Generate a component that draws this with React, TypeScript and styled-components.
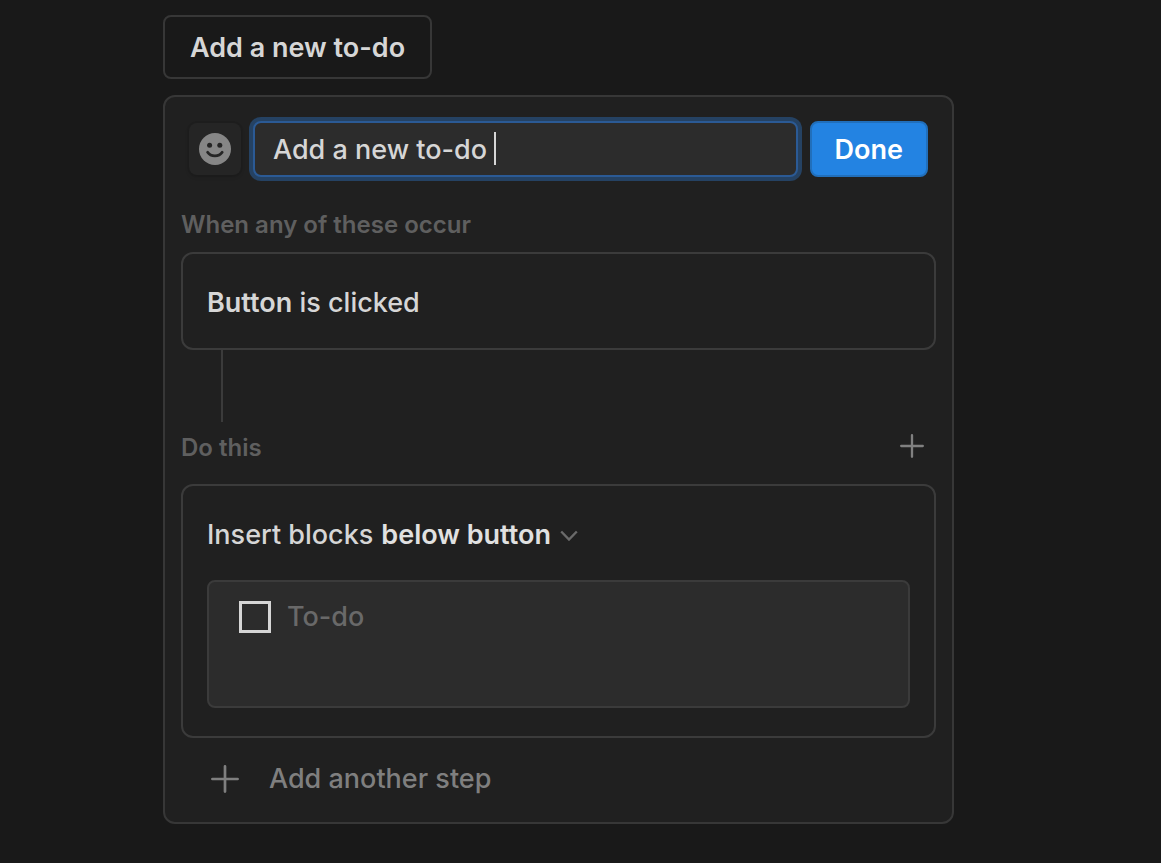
import React, { useState } from "react";
import styled, { createGlobalStyle } from "styled-components";

const GlobalStyle = createGlobalStyle`
  *, *::before, *::after { box-sizing: border-box; }
  body {
    margin: 0;
    background: #191919;
    color: #d6d6d6;
    font-family: Inter, "Liberation Sans", sans-serif;
    font-size: 27px;
    font-weight: 450;
    line-height: 36px;
  }
  button, input, select { font: inherit; color: inherit; margin: 0; }
  button { cursor: pointer; }
`;

const Page = styled.main`
  display: flex;
  flex-direction: column;
  align-items: flex-start;
  gap: 16px;
  padding: 15px 207px 39px 163px;
`;

const PreviewButton = styled.button`
  height: 64px;
  padding: 2px 25px 0;
  border: 2px solid #373737;
  border-radius: 8px;
  background: transparent;
  font-weight: 640;
`;

const Panel = styled.section`
  display: flex;
  flex-direction: column;
  align-self: stretch;
  padding: 24px 16px 17px;
  border: 2px solid #373737;
  border-radius: 12px;
  background: #202020;
`;

const TitleRow = styled.form`
  display: flex;
  align-items: center;
  gap: 12px;
  padding: 0 8px;
`;

const EmojiButton = styled.button`
  display: grid;
  place-items: center;
  width: 52px;
  height: 52px;
  padding: 0;
  border: 0;
  border-radius: 8px;
  background: #252525;
  box-shadow: 0 2px 4px rgba(0, 0, 0, 0.12), 0 0 0 2px rgba(0, 0, 0, 0.06);
`;

const Field = styled.div`
  position: relative;
  flex: 1;
  min-width: 0;
`;

const NameInput = styled.input`
  display: block;
  width: 100%;
  height: 56px;
  padding: 0 18px;
  border: 2px solid #2b5a95;
  border-radius: 8px;
  outline: none;
  background: #2c2c2c;
  box-shadow: 0 0 0 4px #254263;
  caret-color: transparent;
`;

const Caret = styled.span`
  position: absolute;
  top: 11px;
  left: 241px;
  width: 2px;
  height: 33px;
  background: #d6d6d6;
`;

const DoneButton = styled.button`
  height: 56px;
  padding: 2px 23px 0;
  border: 2px solid #216fbb;
  border-radius: 8px;
  background: #2383e2;
  color: #ffffff;
  font-weight: 600;
`;

const SectionHead = styled.div<{ $top: number; $bottom: number }>`
  display: flex;
  align-items: flex-start;
  justify-content: space-between;
  padding: ${(p) => p.$top}px 8px ${(p) => p.$bottom}px 0;
`;

const SectionTitle = styled.h2`
  margin: 0;
  color: #5f5f5f;
  font-size: 24px;
  font-weight: 600;
  line-height: 32px;
`;

const IconButton = styled.button`
  display: grid;
  place-items: center;
  width: 32px;
  height: 28px;
  padding: 0;
  border: 0;
  background: transparent;
  color: #808080;
`;

const Card = styled.div<{ $bottom: number }>`
  padding: 29px 24px ${(p) => p.$bottom}px;
  border: 2px solid #3b3b3b;
  border-radius: 12px;
`;

const CardText = styled.p`
  margin: 0;
  line-height: 40px;
`;

const Strong = styled.b`
  font-weight: 640;
`;

const Connector = styled.div`
  width: 2px;
  height: 72px;
  margin-left: 40px;
  background: #3b3b3b;
`;

const ActionRow = styled.label`
  display: flex;
  align-items: center;
  gap: 8px;
  height: 40px;
`;

const PlaceSelect = styled.span`
  display: flex;
  align-items: center;
  gap: 9px;
  color: #6a6a6a;

  select {
    appearance: none;
    padding: 0;
    border: 0;
    background: transparent;
    color: #e1e1e1;
    font-weight: 640;
  }
`;

const BlockArea = styled.div`
  min-height: 128px;
  margin-top: 25px;
  padding: 17px 30px;
  border: 2px solid #3b3b3b;
  border-radius: 8px;
  background: #2c2c2c;
`;

const TodoLabel = styled.label`
  display: flex;
  align-items: center;
  gap: 16px;
  color: #696969;
`;

const Checkbox = styled.input`
  appearance: none;
  width: 32px;
  height: 32px;
  margin: 0;
  border: 3px solid #d6d6d6;
`;

const AddStep = styled.button`
  display: flex;
  align-items: center;
  align-self: flex-start;
  gap: 30px;
  height: 52px;
  margin-top: 15px;
  padding: 0 30px;
  border: 0;
  background: transparent;
  color: #7f7f7f;
`;

const Plus = ({ size }: { size: number }) => (
  <svg width={size} height={size} viewBox="0 0 28 28" fill="none" stroke="currentColor" strokeWidth="2.7" strokeLinecap="round" aria-hidden="true">
    <path d="M14 1.4v25.2M1.4 14h25.2" />
  </svg>
);

const Smiley = () => (
  <svg width="32" height="32" viewBox="0 0 32 32" aria-hidden="true">
    <circle cx="16" cy="16" r="16" fill="#868686" />
    <circle cx="10.6" cy="12.2" r="2.5" fill="#252525" />
    <circle cx="20.8" cy="12.2" r="2.5" fill="#252525" />
    <path d="M8.6 19.3c1.6 2.4 4.2 3.6 7.3 3.6s5.7-1.2 7.3-3.6" fill="none" stroke="#252525" strokeWidth="2.8" strokeLinecap="round" />
  </svg>
);

const Chevron = () => (
  <svg width="18" height="12" viewBox="0 0 18 12" fill="none" stroke="currentColor" strokeWidth="2.4" aria-hidden="true">
    <path d="M1.2 2.5L9 10.5l7.8-8" />
  </svg>
);

export default function App() {
  const [name, setName] = useState("Add a new to-do");
  return (
    <>
      <GlobalStyle />
      <Page>
        <PreviewButton type="button">Add a new to-do</PreviewButton>
        <Panel>
          <TitleRow onSubmit={(e) => e.preventDefault()}>
            <EmojiButton type="button" aria-label="Choose icon">
              <Smiley />
            </EmojiButton>
            <Field>
              <NameInput type="text" aria-label="Button name" value={name} onChange={(e) => setName(e.target.value)} />
              <Caret />
            </Field>
            <DoneButton type="submit">Done</DoneButton>
          </TitleRow>

          <SectionHead $top={32} $bottom={11}>
            <SectionTitle>When any of these occur</SectionTitle>
          </SectionHead>
          <Card $bottom={25}>
            <CardText>
              <Strong>Button</Strong> is clicked
            </CardText>
          </Card>
          <Connector />

          <SectionHead $top={10} $bottom={20}>
            <SectionTitle>Do this</SectionTitle>
            <IconButton type="button" aria-label="Add action">
              <Plus size={24} />
            </IconButton>
          </SectionHead>
          <Card $bottom={28}>
            <ActionRow>
              Insert blocks
              <PlaceSelect>
                <select defaultValue="below">
                  <option value="below">below button</option>
                </select>
                <Chevron />
              </PlaceSelect>
            </ActionRow>
            <BlockArea>
              <TodoLabel>
                <Checkbox type="checkbox" />
                To-do
              </TodoLabel>
            </BlockArea>
          </Card>
          <AddStep type="button">
            <Plus size={28} />
            Add another step
          </AddStep>
        </Panel>
      </Page>
    </>
  );
}
